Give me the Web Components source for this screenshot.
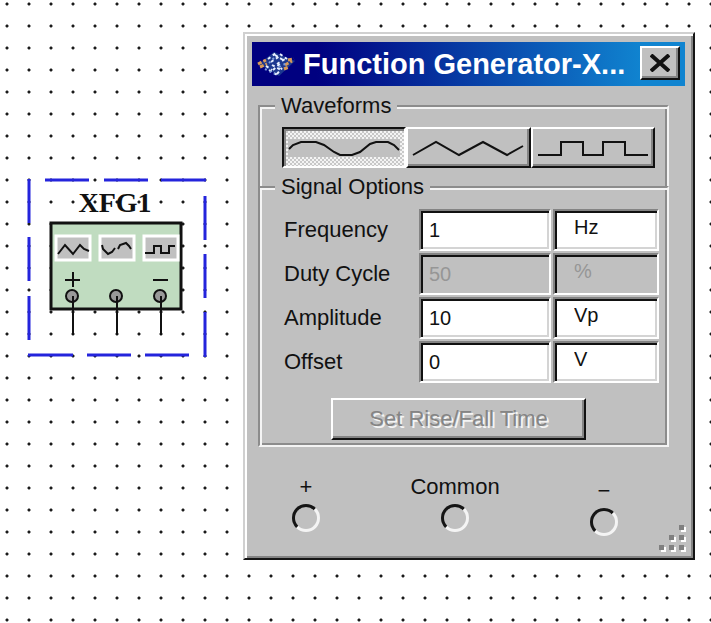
<!DOCTYPE html>
<html lang="en">
<head>
<meta charset="utf-8">
<meta name="viewport" content="width=device-width, initial-scale=1">
<title>Function Generator</title>
<style>
  html, body { margin: 0; min-height: 100vh; background: #fff; }
  body { font: 22px/28px "Liberation Sans", Arial, sans-serif; color: #111; }
</style>
</head>
<body>
<schematic-canvas>
  <generator-symbol name="XFG1"></generator-symbol>
  <tool-window heading="Function Generator-X...">
    <group-box class="first" legend="Waveforms">
      <waveform-picker></waveform-picker>
    </group-box>
    <group-box class="second" legend="Signal Options">
      <signal-field label="Frequency" value="1" unit="Hz"></signal-field>
      <signal-field label="Duty Cycle" value="50" unit="%" disabled></signal-field>
      <signal-field label="Amplitude" value="10" unit="Vp"></signal-field>
      <signal-field label="Offset" value="0" unit="V"></signal-field>
      <rise-fall-button>Set Rise/Fall Time</rise-fall-button>
    </group-box>
    <terminal-row></terminal-row>
  </tool-window>
</schematic-canvas>

<script>
const define = (name, render) => customElements.define(name, class extends HTMLElement {
  constructor() { super(); this.attachShadow({ mode: "open" }); }
  connectedCallback() { this.shadowRoot.innerHTML = render(this); }
});

define("schematic-canvas", () => `
  <style>
    :host { display: block; position: relative; min-height: 100vh; overflow: hidden;
      background: radial-gradient(circle at center, #1a1a1a 1px, transparent 2px) -4px -7px / 22px 22px; }
    ::slotted(generator-symbol) { position: absolute; left: 27px; top: 178px; }
    ::slotted(tool-window) { position: absolute; left: 243px; right: 16px; top: 32px; }
  </style>
  <slot></slot>`);

define("generator-symbol", el => `
  <style>
    :host { display: block; }
    svg { display: block; }
    text { font: bold 28px "Liberation Serif", "Times New Roman", serif; fill: #111; }
  </style>
  <svg width="180" height="180" viewBox="0 0 180 180" fill="none" role="img" aria-label="${el.getAttribute("name")}">
    <path stroke="#2424dc" stroke-width="3" d="M2 1V45M2 59V103M2 118V162M18 2H62M77 2H121M134 2H179M178 18V62M178 76V120M178 134V179M1 177H46M60 177H104M118 177H162"/>
    <text x="88" y="34" text-anchor="middle">${el.getAttribute("name")}</text>
    <rect x="24" y="45" width="130" height="86" fill="#c0dcc0" stroke="#111" stroke-width="3"/>
    <g fill="#c0c0c0" stroke="#fff" stroke-width="3">
      <rect x="29" y="58" width="34" height="24"/><rect x="73" y="58" width="34" height="24"/><rect x="117" y="58" width="34" height="24"/>
    </g>
    <g stroke="#111" stroke-width="2">
      <path d="M31 76L38 67L46 76L53 67L57 71L62 73"/>
      <path d="M75 67L76 71L81 76L85 74L88 70M91 71L93 67L99 65L102 68L104 71"/>
      <path d="M118 75H127V68H134V75H142V68H148"/>
      <path d="M38 102H53M46 94V109M126 102H141"/>
      <g fill="#999"><circle cx="45" cy="118" r="6"/><circle cx="89" cy="118" r="6"/><circle cx="133" cy="118" r="6"/></g>
      <path d="M46 118V157M90 118V157M134 118V157"/>
    </g>
  </svg>`);

define("tool-window", el => `
  <style>
    :host { display: block; }
    section { position: relative; padding: 8px 8px 22px 7px; background: #c0c0c0;
      border: 2px solid; border-color: #d0d0d0 #151515 #151515 #d0d0d0;
      box-shadow: inset 2px 2px #fff, inset -2px -2px #848484; }
    header { display: flex; align-items: center; height: 44px; padding: 0 5px; box-sizing: border-box;
      background: linear-gradient(90deg, #000080 15%, #1084d0 90%); }
    h1 { flex: 1; margin: 0 0 0 6px; min-width: 0; overflow: hidden; white-space: nowrap;
      font: bold 29px/40px "Liberation Sans", Arial, sans-serif; color: #fff; }
    header svg { flex: none; }
    button { display: grid; place-items: center; flex: none; width: 40px; height: 34px; margin-bottom: 2px; padding: 0;
      background: #c0c0c0; border: 2px solid; border-color: #fff #111 #111 #fff; box-shadow: inset -2px -2px #848484; }
    .grip { position: absolute; right: 6px; bottom: 6px; }
  </style>
  <section aria-label="Function Generator">
    <header>
      <svg width="40" height="28" viewBox="0 0 40 28" fill="none" aria-hidden="true">
        <path d="M2 14L17 2L38 11L22 26Z" fill="#1c3890"/>
        <path stroke="#d89a58" stroke-width="3" stroke-dasharray="4 2" d="M1 14L9 10M3 17L10 14M28 15L35 11M27 19L32 17M31 10L37 9"/>
        <path stroke="#e8f0ff" stroke-width="2" stroke-dasharray="3 3" d="M11 9L19 3M14 12L24 5M18 5L26 10M9 16L15 20M12 20L20 25M15 15L24 20M20 14L28 9M16 20L24 13M20 24L25 18M23 4L30 9"/>
        <path stroke="#7c9cdc" stroke-width="2" stroke-dasharray="2 3" d="M8 19L18 24M12 13L17 8M22 17L30 13"/>
      </svg>
      <h1>${el.getAttribute("heading")}</h1>
      <button type="button" aria-label="Close">
        <svg width="20" height="18" viewBox="0 0 20 18" fill="none" stroke="#111" stroke-width="4" aria-hidden="true"><path d="M1 1L19 17M19 1L1 17"/></svg>
      </button>
    </header>
    <slot></slot>
    <svg class="grip" width="28" height="28" viewBox="0 0 28 28" aria-hidden="true">
      <path fill="#fff" d="M22 3h5v5h-5zM12 13h5v5h-5zM22 13h5v5h-5zM2 23h5v5H2zM12 23h5v5h-5zM22 23h5v5h-5z"/>
      <path fill="#808080" d="M20 1h5v5h-5zM10 11h5v5h-5zM20 11h5v5h-5zM0 21h5v5H0zM10 21h5v5h-5zM20 21h5v5h-5z"/>
    </svg>
  </section>`);

define("group-box", el => `
  <style>
    :host { display: block; margin: 0 16px 0 6px; }
    :host(.first) { margin-top: 6px; }
    :host(.second) { margin-top: -14px; }
    fieldset { margin: 0; min-width: 0; border: 2px solid; border-color: #8c8c8c #f4f4f4 #f4f4f4 #8c8c8c;
      box-shadow: inset 2px 2px #f4f4f4, inset -2px -2px #8c8c8c; }
    legend { padding: 0 6px; margin-left: -7px; background: #c0c0c0; }
    :host(.first) fieldset { border-bottom: 0; padding: 7px 12px 19px 22px;
      box-shadow: inset 2px 2px #f4f4f4, inset -2px 0 #8c8c8c; }
    :host(.second) fieldset { padding: 8px 8px 5px 22px; }
  </style>
  <fieldset><legend>${el.getAttribute("legend")}</legend><slot></slot></fieldset>`);

define("waveform-picker", () => `
  <style>
    :host { display: flex; }
    button { flex: 1; display: grid; place-items: center; height: 41px; padding: 0; min-width: 0; background: #c0c0c0;
      border: 2px solid; border-color: #fff #111 #111 #fff; box-shadow: inset -2px -2px #848484; }
    button[aria-pressed="true"] { border-color: #111 #fff #fff #111; box-shadow: inset 2px 2px #848484;
      background: repeating-conic-gradient(#f4f4f4 0 25%, #c8c8c8 0 50%) 0 0 / 4px 4px; }
    [aria-pressed="true"] svg { background: #c0c0c0; }
    svg { display: block; width: 112px; height: 18px; }
    path { fill: none; stroke: #111; stroke-width: 2; }
  </style>
  <button type="button" aria-pressed="true" aria-label="Sine wave"><svg viewBox="0 0 112 18"><path d="M1 10L5 6L13 3H28L36 6L46 13L52 16H64L72 13L82 5L88 3H100L106 6L111 11"/></svg></button>
  <button type="button" aria-pressed="false" aria-label="Triangle wave"><svg viewBox="0 0 112 18"><path d="M1 16L24 3L47 16L71 3L95 16L111 7"/></svg></button>
  <button type="button" aria-pressed="false" aria-label="Square wave"><svg viewBox="0 0 112 18"><path d="M1 16H24V3H46V16H66V3H88V16H111"/></svg></button>`);

define("signal-field", el => {
  const label = el.getAttribute("label");
  const off = el.hasAttribute("disabled") ? "disabled" : "";
  return `
  <style>
    :host { display: grid; grid-template-columns: 135fr 132fr 106fr; column-gap: 2px; margin-bottom: 2px; align-items: center; }
    label { padding-left: 2px; }
    input { box-sizing: border-box; width: 100%; height: 42px; margin: 0; padding: 0 8px; border-radius: 0;
      font: 20px/28px "Liberation Sans", Arial, sans-serif; color: #111; background: #fff;
      border: 2px solid; border-color: #848484 #fff #fff #848484;
      box-shadow: inset 2px 2px #111, inset -2px -2px #d4d4d4; }
    input.unit { padding: 0 4px 6px 19px; }
    input:disabled { color: #969696; background: #c0c0c0; box-shadow: inset 2px 2px #111; }
  </style>
  <label for="value">${label}</label>
  <input id="value" type="text" value="${el.getAttribute("value")}" ${off}>
  <input class="unit" type="text" value="${el.getAttribute("unit")}" aria-label="${label} unit" ${off}>`;
});

define("rise-fall-button", () => `
  <style>
    :host { display: flex; justify-content: center; padding: 13px 24px 0 0; }
    button { height: 42px; padding: 0 36px; font: 22px/28px "Liberation Sans", Arial, sans-serif;
      background: #c0c0c0; color: #858585; text-shadow: 2px 2px #f4f4f4;
      border: 2px solid; border-color: #fff #111 #111 #fff; box-shadow: inset -2px -2px #848484; }
  </style>
  <button type="button" disabled><slot></slot></button>`);

define("terminal-row", () => `
  <style>
    :host { display: flex; justify-content: space-between; padding: 26px 35px 0 8px; }
  </style>
  <signal-terminal label="+"></signal-terminal>
  <signal-terminal label="Common"></signal-terminal>
  <signal-terminal label="−" lowered></signal-terminal>`);

define("signal-terminal", el => `
  <style>
    :host { display: flex; flex-direction: column; align-items: center; gap: 3px; width: 92px; }
    :host([lowered]) { padding-top: 4px; }
    input { appearance: none; width: 28px; height: 28px; margin: 0; border: 3px solid; border-radius: 50%;
      border-color: #151515 #f4f4f4 #f4f4f4 #151515; background: transparent; }
  </style>
  <label for="jack">${el.getAttribute("label")}</label>
  <input id="jack" type="radio">`);
</script>
</body>
</html>
